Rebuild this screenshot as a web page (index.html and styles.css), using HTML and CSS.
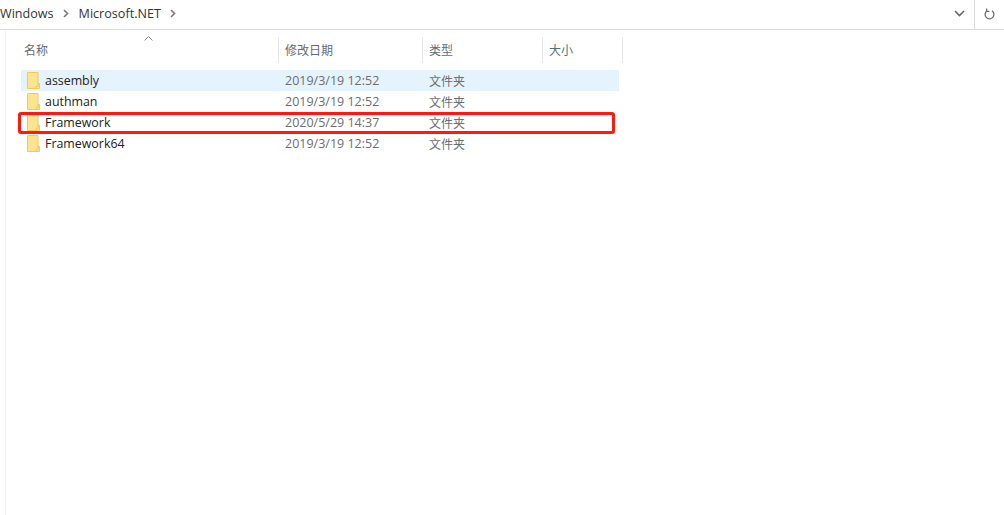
FILE: index.html
```html
<!DOCTYPE html>
<html lang="zh">
<head>
<meta charset="utf-8">
<title>Microsoft.NET</title>
<link rel="stylesheet" href="styles.css">
</head>
<body>
<header class="addressbar">
  <nav class="crumbs">
    <span class="crumb">Windows</span>
    <svg class="sep" width="6" height="9" viewBox="0 0 6 9"><path d="M1 1l3.5 3.5L1 8" fill="none" stroke="#777" stroke-width="1.6"/></svg>
    <span class="crumb">Microsoft.NET</span>
    <svg class="sep" width="6" height="9" viewBox="0 0 6 9"><path d="M1 1l3.5 3.5L1 8" fill="none" stroke="#777" stroke-width="1.6"/></svg>
  </nav>
  <div class="addr-tools">
    <svg class="dropdown" width="11" height="7" viewBox="0 0 11 7"><path d="M1 1l4.5 4.5L10 1" fill="none" stroke="#666" stroke-width="1.6"/></svg>
    <div class="refresh">
      <svg width="11" height="12" viewBox="0 0 11 12"><path d="M3 2.8A4.4 4.4 0 1 0 8 2.8" fill="none" stroke="#6f6f6f" stroke-width="1.3"/><path d="M2.6 .6v2.8h2.8" fill="none" stroke="#6f6f6f" stroke-width="1.3"/></svg>
    </div>
  </div>
</header>
<main class="pane">
  <div class="list">
    <div class="head">
      <svg class="sort" width="9" height="5" viewBox="0 0 9 5"><path d="M.5 4.5l4-4 4 4" fill="none" stroke="#8a8a8a"/></svg>
      <div class="hcell hname">名称</div>
      <div class="hcell">修改日期</div>
      <div class="hcell">类型</div>
      <div class="hcell">大小</div>
    </div>
    <div class="rows">
      <div class="row hover">
        <div class="name"><svg class="folder" width="13" height="17" viewBox="0 0 13 17"><path d="M.5.5h10.5v16H.5z" fill="#fde58f" stroke="#f0ca5c"/><path d="M11 11.5h1.5v5H9v-2h2z" fill="#fde58f" stroke="#f0ca5c"/></svg><span class="fname">assembly</span></div>
        <div class="cell">2019/3/19 12:52</div><div class="cell">文件夹</div>
      </div>
      <div class="row">
        <div class="name"><svg class="folder" width="13" height="17" viewBox="0 0 13 17"><path d="M.5.5h10.5v16H.5z" fill="#fde58f" stroke="#f0ca5c"/><path d="M11 11.5h1.5v5H9v-2h2z" fill="#fde58f" stroke="#f0ca5c"/></svg><span class="fname">authman</span></div>
        <div class="cell">2019/3/19 12:52</div><div class="cell">文件夹</div>
      </div>
      <div class="row marked">
        <div class="name"><svg class="folder" width="13" height="17" viewBox="0 0 13 17"><path d="M.5.5h10.5v16H.5z" fill="#fde58f" stroke="#f0ca5c"/><path d="M11 11.5h1.5v5H9v-2h2z" fill="#fde58f" stroke="#f0ca5c"/></svg><span class="fname">Framework</span></div>
        <div class="cell">2020/5/29 14:37</div><div class="cell">文件夹</div>
      </div>
      <div class="row">
        <div class="name"><svg class="folder" width="13" height="17" viewBox="0 0 13 17"><path d="M.5.5h10.5v16H.5z" fill="#fde58f" stroke="#f0ca5c"/><path d="M11 11.5h1.5v5H9v-2h2z" fill="#fde58f" stroke="#f0ca5c"/></svg><span class="fname">Framework64</span></div>
        <div class="cell">2019/3/19 12:52</div><div class="cell">文件夹</div>
      </div>
    </div>
  </div>
</main>
</body>
</html>
```
FILE: styles.css
```css
* { box-sizing: border-box; }
html, body { margin: 0; height: 100%; }
body {
  width: 1004px;
  height: 515px;
  overflow: hidden;
  background: #fff;
  font-family: "Open Sans", "Noto Sans CJK SC", sans-serif;
  font-size: 12px;
  color: #6d6d6d;
  display: flex;
  flex-direction: column;
}
.addressbar {
  height: 30px;
  flex: none;
  display: flex;
  justify-content: space-between;
  border-bottom: 1px solid #dcdcdc;
}
.crumbs {
  display: flex;
  align-items: center;
  padding-bottom: 2px;
}
.crumb { font-size: 12.6px; color: #333; }
.sep { margin: 0 10px 0 9px; }
.addr-tools { display: flex; align-items: center; }
.dropdown { margin-right: 9px; margin-bottom: 2px; }
.refresh {
  width: 30px;
  height: 29px;
  border-left: 1px solid #dcdcdc;
  display: flex;
  align-items: center;
  justify-content: center;
  padding-bottom: 1px;
}
.pane {
  flex: 1;
  margin-left: 5px;
  border-left: 1px solid #f2f2f2;
  padding: 7px 0 0 15px;
}
.list { width: 602px; }
.head {
  position: relative;
  display: grid;
  grid-template-columns: 258px 144px 120px 80px;
  height: 26px;
}
.sort { position: absolute; left: 123px; top: -1px; }
.hcell {
  font-family: "Noto Sans CJK SC", sans-serif;
  font-size: 12px;
  line-height: 26px;
  padding-left: 6px;
  border-right: 1px solid #e5e5e5;
  color: #5f6b7a;
}
.hname { padding-left: 3px; }
.rows { margin-top: 7px; width: 598px; }
.row {
  position: relative;
  display: grid;
  grid-template-columns: 257px 144px 1fr;
  height: 21px;
  line-height: 21px;
}
.row.hover { background: #e5f3fd; }
.row.marked::after {
  content: "";
  box-sizing: border-box;
  position: absolute;
  left: -3px;
  top: 0;
  width: 597px;
  height: 22px;
  border: 3px solid #ff1a10;
  border-radius: 3px;
}
.name { display: flex; align-items: center; padding-left: 6px; }
.folder { flex: none; }
.fname { margin-left: 5px; color: #222; font-size: 12.4px; }
.cell {
  padding-left: 7px;
  color: #6d6d6d;
  font-size: 12.5px;
}
.cell + .cell {
  padding-left: 7px;
  font-size: 12px;
  font-family: "Noto Sans CJK SC", sans-serif;
}
```
